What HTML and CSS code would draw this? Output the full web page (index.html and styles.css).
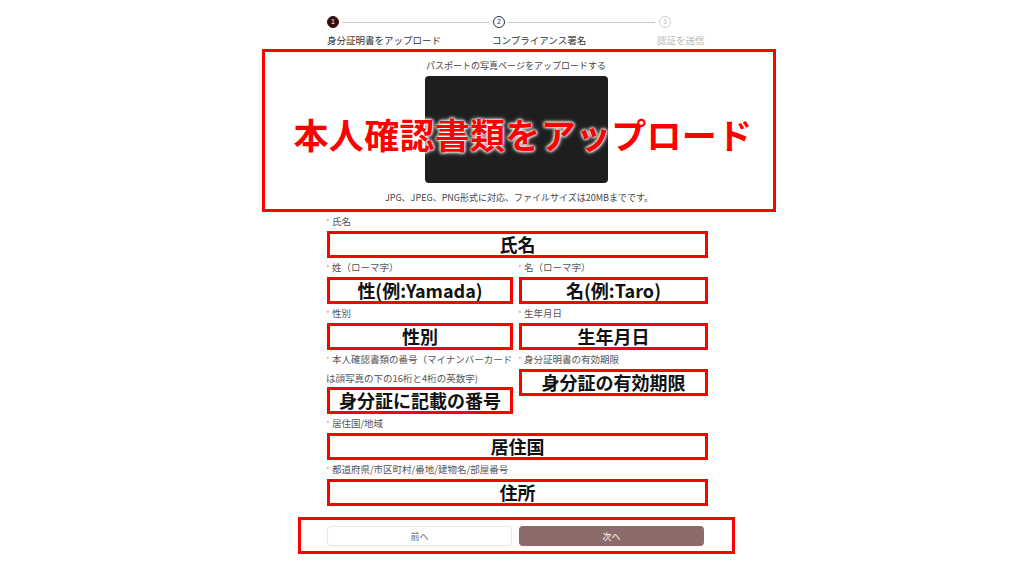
FILE: index.html
```html
<!DOCTYPE html>
<html lang="ja">
<head>
    <meta charset="UTF-8">
    <meta name="viewport" content="width=device-width, initial-scale=1.0">
    <title>本人確認 - 書類アップロード</title>
    <link rel="stylesheet" href="styles.css">
</head>
<body>
    <div class="page">
        <!-- stepper -->
        <div class="steps">
            <div class="step done">
                <div class="step-head">
                    <span class="step-num">1</span>
                    <span class="step-line"></span>
                </div>
                <div class="step-label">身分証明書をアップロード</div>
            </div>
            <div class="step current">
                <div class="step-head">
                    <span class="step-num">2</span>
                    <span class="step-line"></span>
                </div>
                <div class="step-label">コンプライアンス署名</div>
            </div>
            <div class="step todo">
                <div class="step-head">
                    <span class="step-num">3</span>
                </div>
                <div class="step-label">認証を送信</div>
            </div>
        </div>

        <div class="upload-box">
            <p class="upload-title">パスポートの写真ページをアップロードする</p>
            <div class="upload-preview"></div>
            <p class="upload-note">JPG、JPEG、PNG形式に対応、ファイルサイズは20MBまでです。</p>
            <div class="upload-caption">本人確認書類をアップロード</div>
        </div>

        <form class="id-form">
            <div class="field">
                <label><span class="req">*</span> 氏名</label>
                <div class="mark-box">氏名</div>
            </div>

            <div class="field-row">
                <div class="field">
                    <label><span class="req">*</span> 姓（ローマ字）</label>
                    <div class="mark-box">性(例:Yamada)</div>
                </div>
                <div class="field">
                    <label><span class="req">*</span> 名（ローマ字）</label>
                    <div class="mark-box">名(例:Taro)</div>
                </div>
            </div>

            <div class="field-row">
                <div class="field">
                    <label><span class="req">*</span> 性別</label>
                    <div class="mark-box">性別</div>
                </div>
                <div class="field">
                    <label><span class="req">*</span> 生年月日</label>
                    <div class="mark-box">生年月日</div>
                </div>
            </div>

            <div class="field-row">
                <div class="field">
                    <label class="long"><span class="req">*</span> 本人確認書類の番号（マイナンバーカード<br>は顔写真の下の16桁と4桁の英数字)</label>
                    <div class="mark-box">身分証に記載の番号</div>
                </div>
                <div class="field">
                    <label><span class="req">*</span> 身分証明書の有効期限</label>
                    <div class="mark-box">身分証の有効期限</div>
                </div>
            </div>

            <div class="field">
                <label><span class="req">*</span> 居住国/地域</label>
                <div class="mark-box">居住国</div>
            </div>

            <div class="field">
                <label><span class="req">*</span> 都道府県/市区町村/番地/建物名/部屋番号</label>
                <div class="mark-box">住所</div>
            </div>
        </form>

        <div class="actions">
            <button type="button" class="btn-prev">前へ</button>
            <button type="button" class="btn-next">次へ</button>
        </div>
    </div>
</body>
</html>
```

FILE: styles.css
```css
body {
    margin: 0;
    font-family: "Noto Sans CJK JP", "Noto Sans", sans-serif;
    color: #333;
    background-color: #fff;
}

.page {
    width: 514px;
    margin-left: 262px;
    padding-top: 16px;
}

/* stepper */
.steps {
    display: flex;
    margin-left: 65px;
    width: 390px;
}

.step {
    width: 166px;
}

.step.todo {
    width: 58px;
}

.step-head {
    display: flex;
    align-items: center;
    height: 12px;
}

.step-num {
    width: 12px;
    height: 12px;
    box-sizing: border-box;
    border-radius: 50%;
    border: 1px solid #333;
    font-family: "Liberation Sans", sans-serif;
    font-size: 7px;
    line-height: 10px;
    text-align: center;
    flex-shrink: 0;
}

.step-line {
    flex: 1;
    height: 1px;
    background-color: #c8c8c8;
    margin: 0 4px 0 3px;
}

.step.done .step-num {
    background-color: #3a0b0c;
    border-color: #3a0b0c;
    color: #fff;
}

.step.current .step-num {
    background-color: #fff;
    color: #333;
}

.step.todo .step-num {
    border-color: #cfcfcf;
    color: #bbb;
}

.step-label {
    margin-top: 5px;
    font-size: 9.5px;
    line-height: 14px;
    white-space: nowrap;
    margin-left: -6px;
}

.step.done .step-label {
    margin-left: 0;
}

.step.current .step-label {
    margin-left: -1px;
}

.step.todo .step-label {
    color: #b8b8b8;
    margin-left: -2px;
}

/* upload */
.upload-box {
    position: relative;
    margin-top: 2px;
    height: 163px;
    box-sizing: border-box;
    border: 3px solid #ff0000;
    padding: 7px 6px 4px 0;
    display: flex;
    flex-direction: column;
    align-items: center;
}

.upload-title,
.upload-note {
    margin: 0;
    font-size: 9px;
    line-height: 14px;
    color: #444;
}

.upload-preview {
    width: 183px;
    height: 107px;
    margin: 3px 0 8px;
    background-color: #1e1e20;
    border-radius: 4px;
}

.upload-note {
    margin-right: -6px;
}

.upload-caption {
    position: absolute;
    left: 0;
    right: -8px;
    top: 60px;
    text-align: center;
    font-size: 35px;
    font-weight: bold;
    line-height: 44px;
    color: #ff0000;
    letter-spacing: 0.3px;
    text-shadow: 0 0 3px #fff, 0 0 3px #fff, 0 0 5px #fff;
}

/* form */
.id-form {
    margin-left: 65px;
    width: 381px;
}

.field-row {
    display: grid;
    grid-template-columns: 186px 189px;
    column-gap: 6px;
    align-items: start;
}

.field label {
    display: block;
    font-size: 9.5px;
    line-height: 19px;
    color: #555;
    white-space: nowrap;
    margin-left: -1px;
}

.field label.long {
    line-height: 18px;
}

.req {
    color: #f38a8a;
    font-size: 8px;
}

.mark-box {
    height: 27px;
    box-sizing: border-box;
    border: 3px solid #ff0000;
    background-color: #fff;
    text-align: center;
    font-size: 18px;
    font-weight: bold;
    line-height: 20px;
    color: #111;
}

/* buttons */
.actions {
    margin: 11px 0 0 36px;
    width: 437px;
    height: 37px;
    box-sizing: border-box;
    border: 3px solid #ff0000;
    padding: 6px 0 0 26px;
    display: flex;
    gap: 7px;
}

.actions button {
    width: 185px;
    height: 20px;
    border-radius: 4px;
    font-family: "Noto Sans CJK JP", sans-serif;
    font-size: 9px;
    cursor: pointer;
    padding: 0;
}

.btn-prev {
    background-color: #fff;
    border: 1px solid #e6e6e6;
    color: #666;
}

.btn-next {
    background-color: #8c6b6a;
    border: none;
    color: #fff;
}
```
